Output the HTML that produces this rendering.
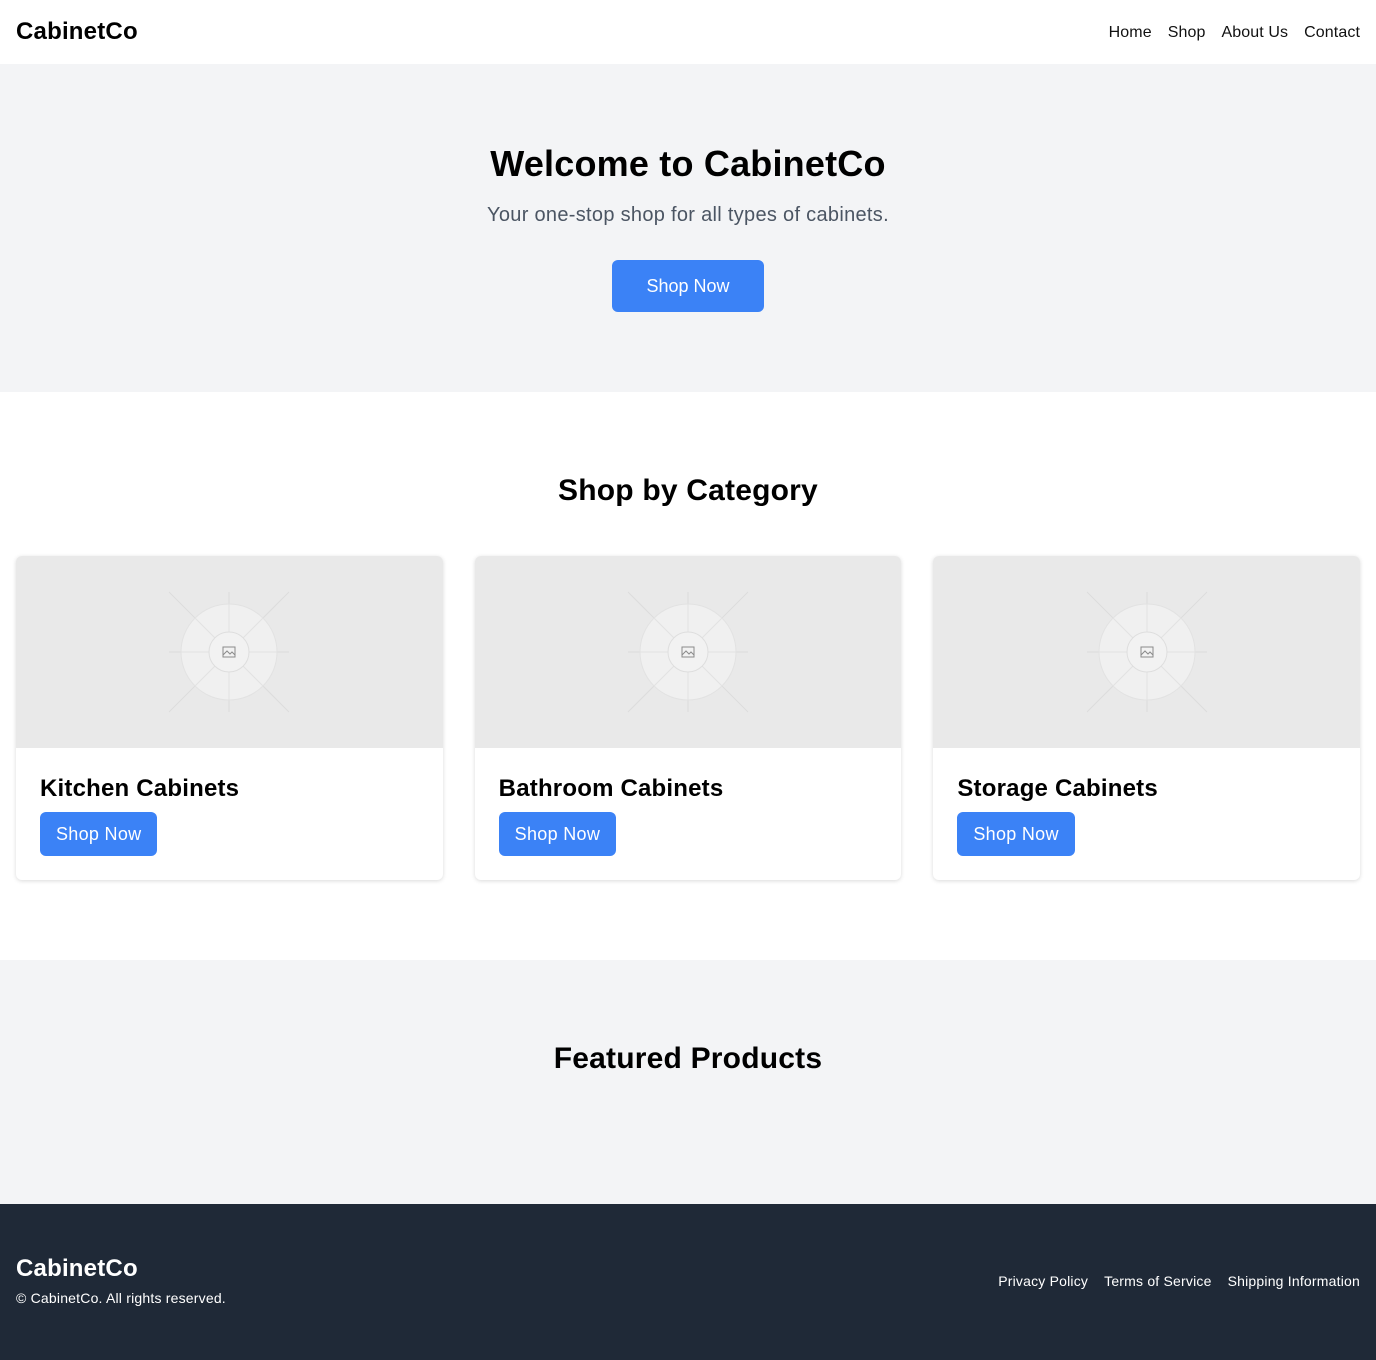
<!DOCTYPE html>
<html><head><meta charset="utf-8"><style>
*{box-sizing:border-box;margin:0;padding:0}
body{width:1376px;font-family:"Liberation Sans",sans-serif;color:#000;background:#fff}
nav{height:64px;display:flex;justify-content:space-between;align-items:center;padding:0 16px}
.logo{font-size:24px;font-weight:bold;letter-spacing:.2px}
nav .links{padding-top:2px}
nav .links a{margin-left:16px;font-size:16px;color:#111;text-decoration:none;letter-spacing:.1px}
.hero{background:#f3f4f6;height:328px;text-align:center;padding-top:78px}
.hero h1{font-size:36px;font-weight:bold;line-height:44px;letter-spacing:.2px}
.hero p{font-size:20px;color:#4b5563;margin-top:15px;line-height:28px;letter-spacing:.3px}
.btn{display:inline-block;background:#3b82f6;color:#fff;border-radius:6px;text-decoration:none}
.hero .btn{margin-top:31px;width:152px;height:52px;line-height:52px;font-size:18px}
.cat{height:568px;padding-top:81px}
h2{font-size:30px;font-weight:bold;text-align:center;line-height:36px;letter-spacing:.2px}
.cards{display:flex;gap:32px;padding:0 16px;margin-top:47px}
.card{width:427px;height:324px;border-radius:6px;box-shadow:0 1px 4px rgba(0,0,0,.15);overflow:hidden}
.img{height:192px;background:#e9e9e9;display:flex;align-items:center;justify-content:center}
.card h3{font-size:24px;font-weight:bold;margin:27px 24px 9px;line-height:28px;letter-spacing:.2px}
.card .btn{margin-left:24px;height:44px;line-height:44px;padding:0 16px;font-size:18px;letter-spacing:.3px}
.feat{background:#f3f4f6;height:244px;padding-top:81px}
footer{background:#1f2937;height:156px;color:#fff;display:flex;justify-content:space-between;align-items:center;padding:0 16px}
footer .logo{line-height:28px;margin-top:-4px}
footer p{font-size:14px;margin-top:7px;letter-spacing:.2px}
footer .links a{color:#fff;font-size:14px;margin-left:16px;text-decoration:none;letter-spacing:.2px}
</style></head><body>
<nav><div class="logo">CabinetCo</div><div class="links"><a>Home</a><a>Shop</a><a>About Us</a><a>Contact</a></div></nav>
<section class="hero"><h1>Welcome to CabinetCo</h1><p>Your one-stop shop for all types of cabinets.</p><a class="btn">Shop Now</a></section>
<section class="cat"><h2>Shop by Category</h2><div class="cards">
<div class="card"><div class="img">SVGX</div><h3>Kitchen Cabinets</h3><a class="btn">Shop Now</a></div>
<div class="card"><div class="img">SVGX</div><h3>Bathroom Cabinets</h3><a class="btn">Shop Now</a></div>
<div class="card"><div class="img">SVGX</div><h3>Storage Cabinets</h3><a class="btn">Shop Now</a></div>
</div></section>
<section class="feat"><h2>Featured Products</h2></section>
<footer><div><div class="logo">CabinetCo</div><p>© CabinetCo. All rights reserved.</p></div><div class="links"><a>Privacy Policy</a><a>Terms of Service</a><a>Shipping Information</a></div></footer>
<script>
var s='<svg width="140" height="140" viewBox="-70 -70 140 140"><g stroke="#dcdcdc" stroke-width="1"><line x1="-60" y1="0" x2="60" y2="0"/><line x1="0" y1="-60" x2="0" y2="60"/><line x1="-60" y1="-60" x2="60" y2="60"/><line x1="-60" y1="60" x2="60" y2="-60"/></g><circle r="48" fill="#f0f0f0" stroke="#e2e2e2"/><g stroke="#e2e2e2"><line x1="-48" y1="0" x2="48" y2="0"/><line x1="0" y1="-48" x2="0" y2="48"/><line x1="-34" y1="-34" x2="34" y2="34"/><line x1="-34" y1="34" x2="34" y2="-34"/></g><circle r="20" fill="#f2f2f2" stroke="#dedede"/><rect x="-6" y="-5" width="12" height="10" fill="none" stroke="#8a8a8a" stroke-width="1"/><path d="M-6 3 L-2 -1 L1 2 L3 0 L6 3" fill="none" stroke="#8a8a8a" stroke-width="1"/></svg>';
document.querySelectorAll('.img').forEach(function(e){e.innerHTML=s});
</script>
</body></html>
